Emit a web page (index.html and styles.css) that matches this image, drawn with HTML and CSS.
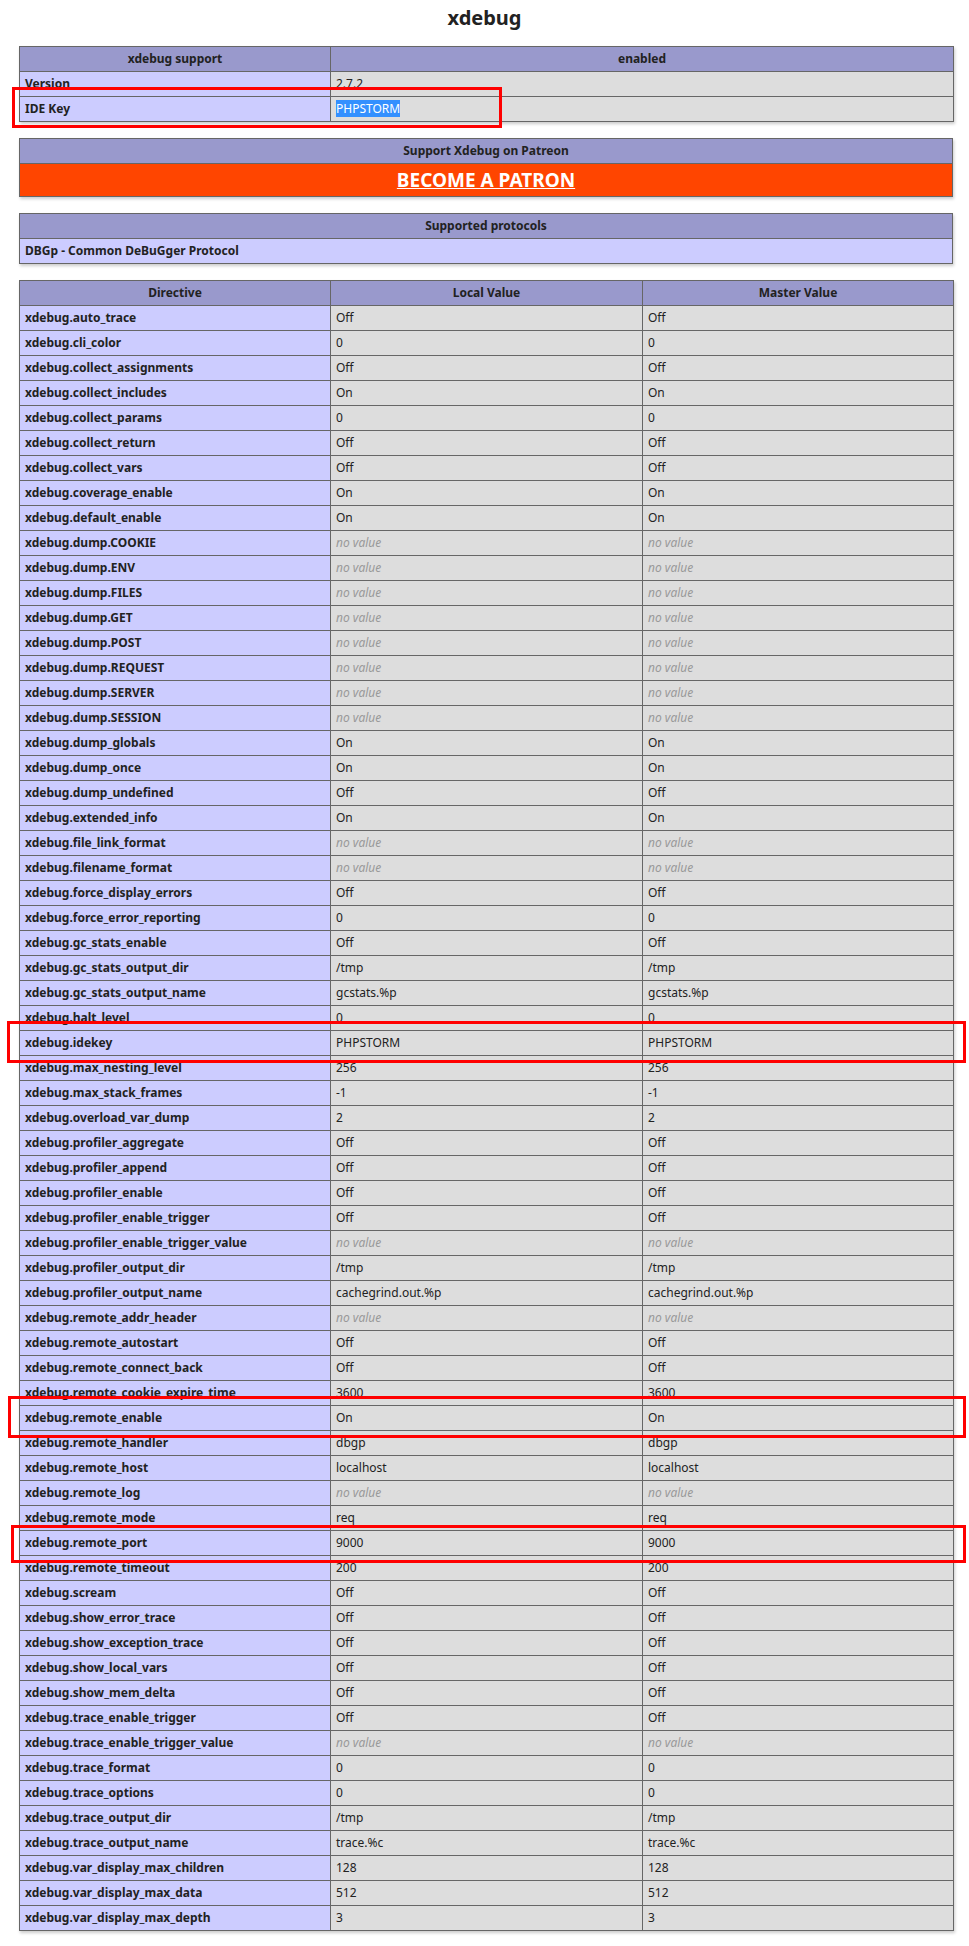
FILE: index.html
```html
<!DOCTYPE html>
<html>
<head>
<meta charset="utf-8">
<link rel="stylesheet" href="styles.css">
</head>
<body>
<div class="page">
  <h2 class="title">xdebug</h2>

  <table class="info two">
    <colgroup><col class="c1"><col class="c2w"></colgroup>
    <tr class="h"><th>xdebug support</th><th>enabled</th></tr>
    <tr><td class="e">Version </td><td class="v">2.7.2 </td></tr>
    <tr><td class="e">IDE Key </td><td class="v"><span class="sel">PHPSTORM</span> </td></tr>
  </table>

  <table class="info">
    <tr class="h"><th>Support Xdebug on Patreon</th></tr>
    <tr><td class="patron"><a class="patron-link" href="#">BECOME A PATRON</a></td></tr>
  </table>

  <table class="info">
    <tr class="h"><th>Supported protocols</th></tr>
    <tr><td class="e">DBGp - Common DeBuGger Protocol</td></tr>
  </table>

  <table class="info three">
    <colgroup><col class="c1"><col class="c2"><col class="c3"></colgroup>
    <tr class="h"><th>Directive</th><th>Local Value</th><th>Master Value</th></tr>
    <tr><td class="e">xdebug.auto_trace</td><td class="v">Off</td><td class="v">Off</td></tr>
    <tr><td class="e">xdebug.cli_color</td><td class="v">0</td><td class="v">0</td></tr>
    <tr><td class="e">xdebug.collect_assignments</td><td class="v">Off</td><td class="v">Off</td></tr>
    <tr><td class="e">xdebug.collect_includes</td><td class="v">On</td><td class="v">On</td></tr>
    <tr><td class="e">xdebug.collect_params</td><td class="v">0</td><td class="v">0</td></tr>
    <tr><td class="e">xdebug.collect_return</td><td class="v">Off</td><td class="v">Off</td></tr>
    <tr><td class="e">xdebug.collect_vars</td><td class="v">Off</td><td class="v">Off</td></tr>
    <tr><td class="e">xdebug.coverage_enable</td><td class="v">On</td><td class="v">On</td></tr>
    <tr><td class="e">xdebug.default_enable</td><td class="v">On</td><td class="v">On</td></tr>
    <tr><td class="e">xdebug.dump.COOKIE</td><td class="v"><i>no value</i></td><td class="v"><i>no value</i></td></tr>
    <tr><td class="e">xdebug.dump.ENV</td><td class="v"><i>no value</i></td><td class="v"><i>no value</i></td></tr>
    <tr><td class="e">xdebug.dump.FILES</td><td class="v"><i>no value</i></td><td class="v"><i>no value</i></td></tr>
    <tr><td class="e">xdebug.dump.GET</td><td class="v"><i>no value</i></td><td class="v"><i>no value</i></td></tr>
    <tr><td class="e">xdebug.dump.POST</td><td class="v"><i>no value</i></td><td class="v"><i>no value</i></td></tr>
    <tr><td class="e">xdebug.dump.REQUEST</td><td class="v"><i>no value</i></td><td class="v"><i>no value</i></td></tr>
    <tr><td class="e">xdebug.dump.SERVER</td><td class="v"><i>no value</i></td><td class="v"><i>no value</i></td></tr>
    <tr><td class="e">xdebug.dump.SESSION</td><td class="v"><i>no value</i></td><td class="v"><i>no value</i></td></tr>
    <tr><td class="e">xdebug.dump_globals</td><td class="v">On</td><td class="v">On</td></tr>
    <tr><td class="e">xdebug.dump_once</td><td class="v">On</td><td class="v">On</td></tr>
    <tr><td class="e">xdebug.dump_undefined</td><td class="v">Off</td><td class="v">Off</td></tr>
    <tr><td class="e">xdebug.extended_info</td><td class="v">On</td><td class="v">On</td></tr>
    <tr><td class="e">xdebug.file_link_format</td><td class="v"><i>no value</i></td><td class="v"><i>no value</i></td></tr>
    <tr><td class="e">xdebug.filename_format</td><td class="v"><i>no value</i></td><td class="v"><i>no value</i></td></tr>
    <tr><td class="e">xdebug.force_display_errors</td><td class="v">Off</td><td class="v">Off</td></tr>
    <tr><td class="e">xdebug.force_error_reporting</td><td class="v">0</td><td class="v">0</td></tr>
    <tr><td class="e">xdebug.gc_stats_enable</td><td class="v">Off</td><td class="v">Off</td></tr>
    <tr><td class="e">xdebug.gc_stats_output_dir</td><td class="v">/tmp</td><td class="v">/tmp</td></tr>
    <tr><td class="e">xdebug.gc_stats_output_name</td><td class="v">gcstats.%p</td><td class="v">gcstats.%p</td></tr>
    <tr><td class="e">xdebug.halt_level</td><td class="v">0</td><td class="v">0</td></tr>
    <tr><td class="e">xdebug.idekey</td><td class="v">PHPSTORM</td><td class="v">PHPSTORM</td></tr>
    <tr><td class="e">xdebug.max_nesting_level</td><td class="v">256</td><td class="v">256</td></tr>
    <tr><td class="e">xdebug.max_stack_frames</td><td class="v">-1</td><td class="v">-1</td></tr>
    <tr><td class="e">xdebug.overload_var_dump</td><td class="v">2</td><td class="v">2</td></tr>
    <tr><td class="e">xdebug.profiler_aggregate</td><td class="v">Off</td><td class="v">Off</td></tr>
    <tr><td class="e">xdebug.profiler_append</td><td class="v">Off</td><td class="v">Off</td></tr>
    <tr><td class="e">xdebug.profiler_enable</td><td class="v">Off</td><td class="v">Off</td></tr>
    <tr><td class="e">xdebug.profiler_enable_trigger</td><td class="v">Off</td><td class="v">Off</td></tr>
    <tr><td class="e">xdebug.profiler_enable_trigger_value</td><td class="v"><i>no value</i></td><td class="v"><i>no value</i></td></tr>
    <tr><td class="e">xdebug.profiler_output_dir</td><td class="v">/tmp</td><td class="v">/tmp</td></tr>
    <tr><td class="e">xdebug.profiler_output_name</td><td class="v">cachegrind.out.%p</td><td class="v">cachegrind.out.%p</td></tr>
    <tr><td class="e">xdebug.remote_addr_header</td><td class="v"><i>no value</i></td><td class="v"><i>no value</i></td></tr>
    <tr><td class="e">xdebug.remote_autostart</td><td class="v">Off</td><td class="v">Off</td></tr>
    <tr><td class="e">xdebug.remote_connect_back</td><td class="v">Off</td><td class="v">Off</td></tr>
    <tr><td class="e">xdebug.remote_cookie_expire_time</td><td class="v">3600</td><td class="v">3600</td></tr>
    <tr><td class="e">xdebug.remote_enable</td><td class="v">On</td><td class="v">On</td></tr>
    <tr><td class="e">xdebug.remote_handler</td><td class="v">dbgp</td><td class="v">dbgp</td></tr>
    <tr><td class="e">xdebug.remote_host</td><td class="v">localhost</td><td class="v">localhost</td></tr>
    <tr><td class="e">xdebug.remote_log</td><td class="v"><i>no value</i></td><td class="v"><i>no value</i></td></tr>
    <tr><td class="e">xdebug.remote_mode</td><td class="v">req</td><td class="v">req</td></tr>
    <tr><td class="e">xdebug.remote_port</td><td class="v">9000</td><td class="v">9000</td></tr>
    <tr><td class="e">xdebug.remote_timeout</td><td class="v">200</td><td class="v">200</td></tr>
    <tr><td class="e">xdebug.scream</td><td class="v">Off</td><td class="v">Off</td></tr>
    <tr><td class="e">xdebug.show_error_trace</td><td class="v">Off</td><td class="v">Off</td></tr>
    <tr><td class="e">xdebug.show_exception_trace</td><td class="v">Off</td><td class="v">Off</td></tr>
    <tr><td class="e">xdebug.show_local_vars</td><td class="v">Off</td><td class="v">Off</td></tr>
    <tr><td class="e">xdebug.show_mem_delta</td><td class="v">Off</td><td class="v">Off</td></tr>
    <tr><td class="e">xdebug.trace_enable_trigger</td><td class="v">Off</td><td class="v">Off</td></tr>
    <tr><td class="e">xdebug.trace_enable_trigger_value</td><td class="v"><i>no value</i></td><td class="v"><i>no value</i></td></tr>
    <tr><td class="e">xdebug.trace_format</td><td class="v">0</td><td class="v">0</td></tr>
    <tr><td class="e">xdebug.trace_options</td><td class="v">0</td><td class="v">0</td></tr>
    <tr><td class="e">xdebug.trace_output_dir</td><td class="v">/tmp</td><td class="v">/tmp</td></tr>
    <tr><td class="e">xdebug.trace_output_name</td><td class="v">trace.%c</td><td class="v">trace.%c</td></tr>
    <tr><td class="e">xdebug.var_display_max_children</td><td class="v">128</td><td class="v">128</td></tr>
    <tr><td class="e">xdebug.var_display_max_data</td><td class="v">512</td><td class="v">512</td></tr>
    <tr><td class="e">xdebug.var_display_max_depth</td><td class="v">3</td><td class="v">3</td></tr>
  </table>

  <div class="mark mark-idekey-top"></div>
  <div class="mark mark-idekey"></div>
  <div class="mark mark-enable"></div>
  <div class="mark mark-port"></div>
</div>
</body>
</html>
```

FILE: styles.css
```css
html, body {
  margin: 0;
  padding: 0;
  background: #fff;
}

.page {
  position: relative;
  padding: 4px 0 14px 0;
  color: #222;
  font-family: "Noto Sans", "Open Sans", "DejaVu Sans", sans-serif;
}

.title {
  margin: 0;
  text-align: center;
  font-size: 20px;
  line-height: 28px;
  font-weight: bold;
}

.info {
  border-collapse: collapse;
  border: 0;
  width: 934px;
  margin: 14px 0 0 19px;
  box-shadow: 1px 2px 3px #ccc;
  table-layout: fixed;
}

.info + .info {
  margin-top: 16px;
}

.info th,
.info td {
  border: 1px solid #666;
  font-size: 12px;
  line-height: 16px;
  vertical-align: baseline;
  padding: 4px 5px;
  text-align: left;
}

.info .c1 { width: 311px; }
.info .c2w { width: 623px; }
.info .c2 { width: 312px; }
.info .c3 { width: 311px; }

.h th {
  background-color: #99c;
  font-weight: bold;
  text-align: center;
}

.e {
  background-color: #ccf;
  font-weight: bold;
}

.v {
  background-color: #ddd;
  overflow-wrap: break-word;
}

.v i {
  color: #999;
}

.sel {
  background: #3390ff;
  color: #fff;
}

.info td.patron {
  background-color: #ff4500;
  text-align: center;
  font-size: 19px;
  line-height: 24px;
}

.patron-link {
  color: #fff;
  font-weight: bold;
  text-decoration: underline;
}

.mark {
  position: absolute;
  border: 3px solid #f00;
  box-sizing: border-box;
  pointer-events: none;
}

.mark-idekey-top {
  left: 12px;
  top: 87px;
  width: 490px;
  height: 41px;
}

.mark-idekey {
  left: 7px;
  top: 1021px;
  width: 959px;
  height: 42px;
}

.mark-enable {
  left: 8px;
  top: 1396px;
  width: 958px;
  height: 42px;
}

.mark-port {
  left: 11px;
  top: 1525px;
  width: 955px;
  height: 38px;
}
```
